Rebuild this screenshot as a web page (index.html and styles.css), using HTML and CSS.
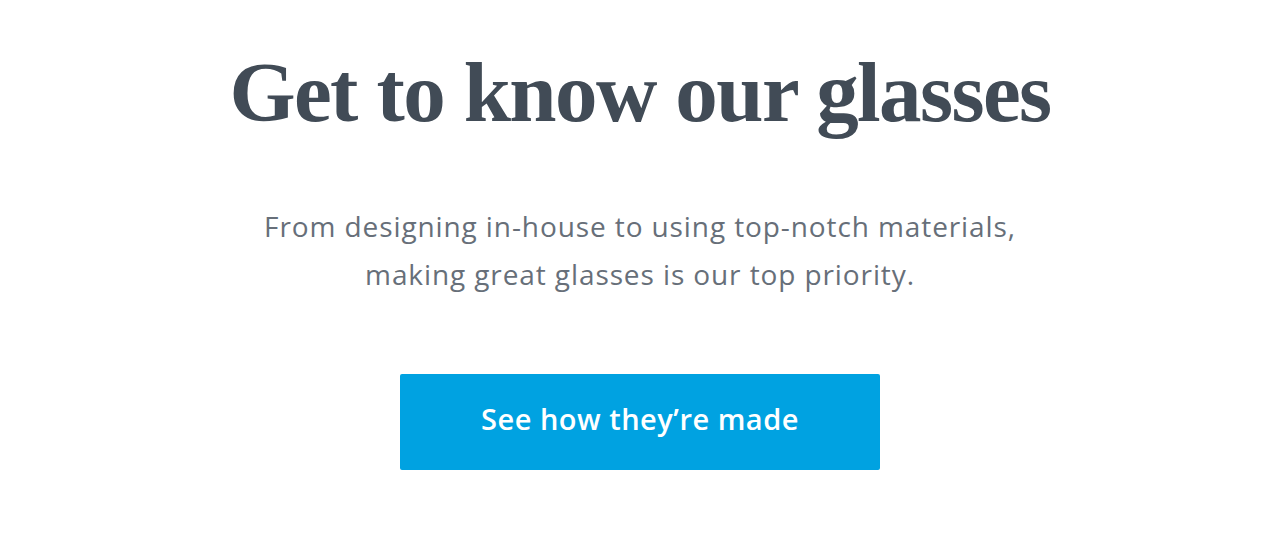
FILE: index.html
```html
<!DOCTYPE html>
<html lang="en">
<head>
<meta charset="utf-8">
<title>Get to know our glasses</title>
<link rel="stylesheet" href="styles.css">
</head>
<body>
<section class="intro">
  <h1 class="intro-title">Get to know our glasses</h1>
  <p class="intro-text">From designing in-house to using top-notch materials,<br>making great glasses is our top priority.</p>
  <a class="intro-button" href="#">See how they’re made</a>
</section>
</body>
</html>
```
FILE: styles.css
```css
html, body {
  margin: 0;
  padding: 0;
  background: #ffffff;
}
.intro {
  display: flex;
  flex-direction: column;
  align-items: center;
  padding-top: 42px;
}
.intro-title {
  margin: 0;
  font-family: "Liberation Serif", "DejaVu Serif", serif;
  font-weight: 700;
  font-size: 85px;
  letter-spacing: -1.6px;
  line-height: 100px;
  color: #414b56;
}
.intro-text {
  margin: 60px 0 0;
  font-family: "Open Sans", "Lato", sans-serif;
  font-size: 28px;
  letter-spacing: 0.9px;
  line-height: 48px;
  color: #676f79;
  text-align: center;
}
.intro-button {
  margin-top: 76px;
  box-sizing: border-box;
  display: flex;
  align-items: center;
  justify-content: center;
  width: 480px;
  height: 96px;
  padding-bottom: 8px;
  background: #00a2e1;
  border-radius: 2px;
  color: #ffffff;
  font-family: "Open Sans", "Lato", sans-serif;
  font-weight: 600;
  font-size: 29px;
  letter-spacing: 0.5px;
  text-decoration: none;
}
```
